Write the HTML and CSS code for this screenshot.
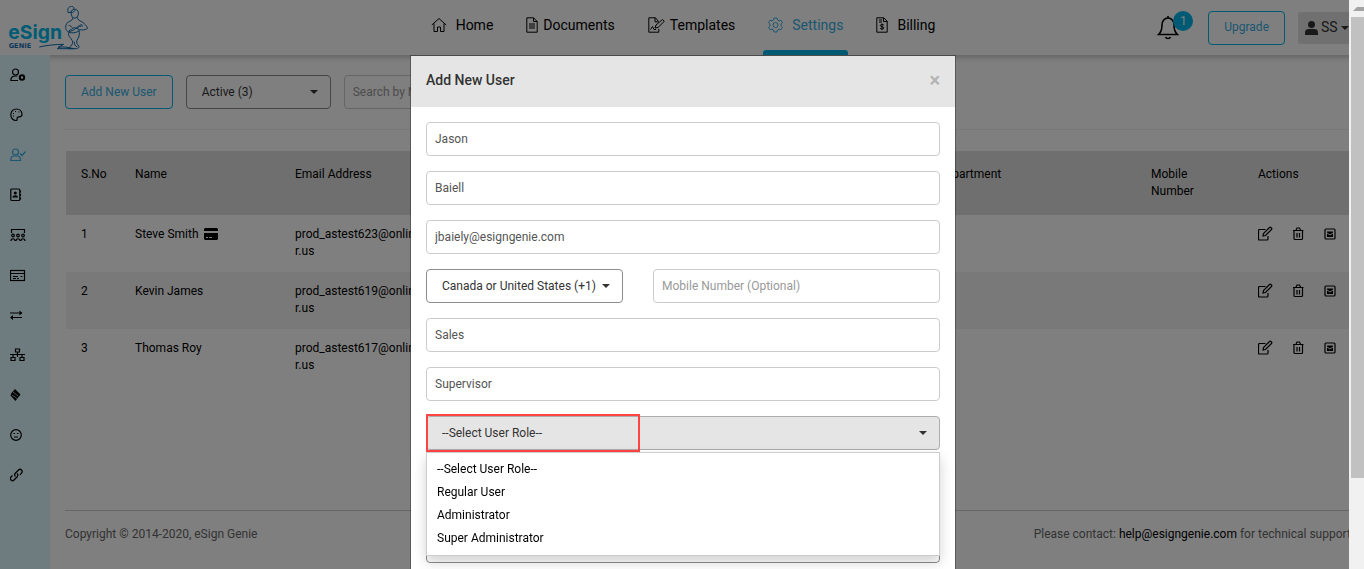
FILE: index.html
```html
<!DOCTYPE html>
<html lang="en">
<head>
  <meta charset="UTF-8">
  <meta name="viewport" content="width=device-width, initial-scale=1.0">
  <title>eSign Genie - Users</title>
  <link rel="stylesheet" href="styles.css">
</head>
<body>
  <!-- icons used more than once -->
  <svg class="sprite" aria-hidden="true">
    <symbol id="i-edit" viewBox="0 0 16 16"><path d="M7.500 3.500H1.500a1 1 0 0 0-1 1v8.500a1 1 0 0 0 1 1H9a1 1 0 0 0 1-1V10"/><path d="M5 10l.5-2.500L11.500 1.500a1 1 0 0 1 1.500 0l.5.5a1 1 0 0 1 0 1.500L7.500 9.500z"/></symbol>
    <symbol id="i-trash" viewBox="0 0 16 16"><path d="M3 4.500h10.500M6 4l1-2h2.500l1 2M4 4.500v8a1 1 0 0 0 1 1h6.500a1 1 0 0 0 1-1v-8M7 7v4.500M9.500 7v4.500"/></symbol>
    <symbol id="i-mail" viewBox="0 0 16 16"><rect x="3" y="3" width="10" height="10" rx="1"/><path class="fill" d="M5 5.500h6v1L8 8.500 5 6.500z"/><path class="fill" d="M5 7.500L8 9.500l3-2V11H5z"/></symbol>
  </svg>

  <div class="app">
    <header class="header">
      <a class="logo" href="#" aria-label="eSign Genie">
        <svg viewBox="27 18 240 132" width="80" height="44">
          <text class="logo-name" x="25" y="116">eSign</text>
          <text class="logo-sub" x="26" y="144">GENIE</text>
          <g class="logo-genie">
            <path d="M204 38c-2-10 1-19 10-19 7 0 9 5 7 9M204 38l10-2M221 28c-7 2-9 8-7 15 1 8 6 13 12 11 7-2 10-10 9-17-1-6-7-11-14-9zM213 38c7 0 11-5 13-9"/>
            <path d="M218 53c0 6-3 8-9 11-9 3-12 10-12 18 0 10 6 14 14 12 9-2 16-8 24-15 4-4 9-4 11-7M232 52c1 7 6 10 13 13 8 4 14 12 18 20-7 5-16 6-25 4-6-2-10-7-15-6-5 2-10 7-16 9M206 76c4 0 9 5 12 8M229 86c6-5 14-10 20-8"/>
            <path d="M207 95c-4 9 0 14 5 20 7 8 8 14 3 20-3 5-9 6-9 11h23c4 0 9-3 8-7l-4-5c-4-4-4-11 0-17 5-8 6-15 4-27M207 97c8 3 20 2 30-4M223 125c-1 8 2 13 9 16"/>
            <path d="M118 141c22-5 48-8 73-8l-17 9c18-3 29 0 48 4h-51"/>
          </g>
        </svg>
      </a>

      <nav class="nav">
        <a class="nav-item wide" href="#">
          <svg width="16" height="16" viewBox="0 0 16 16"><path d="M.8 8L8 1.500 15.200 8M3 6.500v8h3.500V10h3v4.500H13v-8"/></svg>Home</a>
        <a class="nav-item" href="#">
          <svg width="12" height="16" viewBox="0 0 12 16"><path d="M.8.8h6.700l3.700 3.700v10.700H.8zM7.500.8v3.700h3.700M3 7h6M3 9h6M3 11h6"/></svg>Documents</a>
        <a class="nav-item" href="#">
          <svg width="17" height="16" viewBox="0 0 17 16"><path d="M10.500 4.500L7.500.8H.8v14.400h10V12M7 .8v4h3.500M7 11l1-3 6.500-5.500 1.800 1.800L10 10.500zM2.500 12.500l2-3 1.500 3h2"/></svg>Templates</a>
        <a class="nav-item wide active" href="#">
          <svg width="15" height="16" viewBox="0 0 15 16"><path d="M6 1h3l.5 2 1.500.9 2-.6 1.500 2.500L13 7.200v1.600l1.500 1.400-1.500 2.500-2-.6-1.500.9L9 15H6l-.5-2-1.500-.9-2 .6-1.500-2.500L2 8.800V7.200L.5 5.800 2 3.300l2 .6L5.500 3z"/><circle cx="7.500" cy="8" r="2.500"/></svg>Settings</a>
        <a class="nav-item wide" href="#">
          <svg width="12" height="16" viewBox="0 0 12 16"><path d="M.8.800h7l3.400 3.400v11H.800zM7.500.800v3.700h3.700M3 3h3M3 5h3M7.800 8c-1.500-1-3.500-.6-3.500.6 0 1.600 3.600.8 3.600 2.300 0 1.200-2.200 1.600-3.700.5M6 6.500v6.500"/></svg>Billing</a>
      </nav>

      <div class="header-right">
        <button class="bell" type="button" aria-label="Notifications">
          <svg width="22" height="26" viewBox="0 0 22 26"><path d="M11 1v2M1.500 19.500c2.500-2 3.500-4 3.500-9.500C5 6 7.500 3 11 3s6 3 6 7c0 5.500 1 7.500 3.500 9.500zM8.500 22c.8 2 4.200 2 5 0"/></svg>
          <span class="badge">1</span>
        </button>
        <button class="btn" type="button">Upgrade</button>
        <button class="account" type="button">
          <svg width="13" height="14" viewBox="0 0 13 14"><circle cx="6.500" cy="3.500" r="3.500"/><path d="M0 14v-2.500C0 9 1.500 8 4 8h5c2.500 0 4 1 4 3.500V14z"/></svg>SS<span class="caret"></span>
        </button>
      </div>
    </header>

    <div class="body">
      <nav class="sidebar" aria-label="Settings">
        <a href="#" aria-label="Account"><svg viewBox="0 0 16 16"><circle cx="5.500" cy="5" r="3"/><path d="M8 13.500H.8c0-3 1.200-4.500 4.700-4.500h2"/><circle class="gear" cx="12" cy="10.500" r="2.200"/></svg></a>
        <a href="#" aria-label="Branding"><svg viewBox="0 0 16 16"><path d="M6.500 2C3 2 .8 4.500.8 7.800c0 3.400 2.500 5.800 5.200 5.700 2 0 .6-2 1.300-3 .9-1.200 4.700.4 4.700-3C12 4 9.500 2 6.500 2z"/><path d="M3 9h1M3 6.500h1M5 4.500h1M8.500 5h1"/></svg></a>
        <a class="active" href="#" aria-label="Users"><svg viewBox="0 0 16 16"><circle cx="5.500" cy="5" r="3"/><path d="M3.500 9h4c2 0 3 1.500 3 4.500H.8C.8 10.500 1.500 9 3.500 9zM10 6.500l2 2L15.500 4.500"/></svg></a>
        <a href="#" aria-label="Contacts"><svg viewBox="0 0 16 16"><rect x=".8" y="2" width="9" height="11.500" rx="1"/><circle class="fill" cx="5.300" cy="6" r="1.500"/><path class="fill" d="M2.500 10.500c0-3 5.500-3 5.500 0z"/><path d="M10.500 3.500v2M10.500 7v2M10.500 10.500v2"/></svg></a>
        <a href="#" aria-label="Groups"><svg viewBox="0 0 16 16"><path d="M1.500 6V2.500h13V6"/><circle cx="3" cy="8.500" r="1.300"/><circle cx="8" cy="8.500" r="1.300"/><circle cx="13" cy="8.500" r="1.300"/><path d="M1 14c0-3 4-3 4 0M6 14c0-3 4-3 4 0M11 14c0-3 4-3 4 0"/></svg></a>
        <a href="#" aria-label="Forms"><svg viewBox="0 0 16 16"><rect x=".5" y="3.500" width="14" height="10"/><path d="M1 6.500h14M3 9.500h5M3 11.500h3M7 11.500h2M10.500 9.500h2"/></svg></a>
        <a href="#" aria-label="Transfer"><svg viewBox="0 0 16 16"><path d="M0 6h11M2 10.500h10"/><path class="fill" d="M9.500 3.500l3 2.500-3 2.500zM3 8L0 10.500 3 13z"/></svg></a>
        <a href="#" aria-label="Workflow"><svg viewBox="0 0 16 16"><path d="M5.500 2h4v3h-4zM7.500 5v5M0 7.500h15M3 7.500V10M12 7.500V10M1 10.500h4v3H1zM10 10.500h4v3h-4z"/></svg></a>
        <a href="#" aria-label="Integrations"><svg viewBox="0 0 16 16"><path class="fill" d="M5 2l5.500 5.500L5.500 14 .5 8.500 1.500 6z"/><path class="cut" d="M3 5l5 4M2 8l5 3.500"/></svg></a>
        <a href="#" aria-label="Feedback"><svg viewBox="0 0 16 16"><circle cx="6" cy="8" r="5.300"/><path d="M3.500 6.500H5M7 6.500h1.500M4 10h4"/></svg></a>
        <a href="#" aria-label="Links"><svg viewBox="0 0 16 16"><path d="M5.500 9.500c-1-1-1-2.500 0-3.500l3-3c2-2 5 1 3 3L10 8M7 6.500c1 1 1 2.500 0 3.500l-3 3c-2 2-5-1-3-3l1.500-1.500"/></svg></a>
      </nav>

      <main class="content">
        <div class="toolbar">
          <button class="btn" type="button">Add New User</button>
          <div class="select status">
            <select aria-label="Status"><option>Active (3)</option></select>
          </div>
          <input class="field search" type="text" placeholder="Search by Name or Email" aria-label="Search">
        </div>

        <table class="users">
          <colgroup>
            <col class="c-no"><col class="c-name"><col class="c-email"><col><col class="c-dept"><col class="c-mobile"><col class="c-actions">
          </colgroup>
          <thead>
            <tr><th>S.No</th><th>Name</th><th>Email Address</th><th></th><th>Department</th><th>Mobile Number</th><th>Actions</th></tr>
          </thead>
          <tbody>
            <tr>
              <td>1</td>
              <td>Steve Smith <svg class="card" width="14" height="12" viewBox="0 0 14 12"><path d="M1 0h12l1 1v2H0V1zM0 5h14v6l-1 1H1l-1-1z"/><path class="card-line" d="M2 9.500h2M5 9.500h3"/></svg></td>
              <td>prod_astest623@onlinesigne<br>r.us</td><td></td><td></td><td></td>
              <td><div class="actions">
                <button type="button" aria-label="Edit"><svg><use href="#i-edit"/></svg></button>
                <button type="button" aria-label="Delete"><svg><use href="#i-trash"/></svg></button>
                <button type="button" aria-label="Email"><svg><use href="#i-mail"/></svg></button>
              </div></td>
            </tr>
            <tr>
              <td>2</td>
              <td>Kevin James</td>
              <td>prod_astest619@onlinesigne<br>r.us</td><td></td><td></td><td></td>
              <td><div class="actions">
                <button type="button" aria-label="Edit"><svg><use href="#i-edit"/></svg></button>
                <button type="button" aria-label="Delete"><svg><use href="#i-trash"/></svg></button>
                <button type="button" aria-label="Email"><svg><use href="#i-mail"/></svg></button>
              </div></td>
            </tr>
            <tr>
              <td>3</td>
              <td>Thomas Roy</td>
              <td>prod_astest617@onlinesigne<br>r.us</td><td></td><td></td><td></td>
              <td><div class="actions">
                <button type="button" aria-label="Edit"><svg><use href="#i-edit"/></svg></button>
                <button type="button" aria-label="Delete"><svg><use href="#i-trash"/></svg></button>
                <button type="button" aria-label="Email"><svg><use href="#i-mail"/></svg></button>
              </div></td>
            </tr>
          </tbody>
        </table>

        <footer class="footer">
          <span>Copyright © 2014-2020, eSign Genie</span>
          <span>Please contact: <a href="#">help@esigngenie.com</a> for technical support.</span>
        </footer>
      </main>
    </div>
  </div>

  <div class="overlay">
    <form class="modal" role="dialog" aria-labelledby="modal-title">
      <div class="modal-header">
        <h2 id="modal-title">Add New User</h2>
        <button class="close" type="button" aria-label="Close">×</button>
      </div>
      <div class="modal-body">
        <input class="field" type="text" value="Jason" aria-label="First Name">
        <input class="field" type="text" value="Baiell" aria-label="Last Name">
        <input class="field" type="text" value="jbaiely@esigngenie.com" aria-label="Email Address">
        <div class="phone">
          <div class="select">
            <select aria-label="Country Code"><option>Canada or United States (+1)</option></select>
          </div>
          <input class="field" type="text" placeholder="Mobile Number (Optional)" aria-label="Mobile Number">
        </div>
        <input class="field" type="text" value="Sales" aria-label="Department">
        <input class="field" type="text" value="Supervisor" aria-label="Title">
        <div class="select role">
          <select aria-label="User Role"><option>--Select User Role--</option></select>
          <div class="highlight"></div>
          <ul class="menu">
            <li><a href="#">--Select User Role--</a></li>
            <li><a href="#">Regular User</a></li>
            <li><a href="#">Administrator</a></li>
            <li><a href="#">Super Administrator</a></li>
          </ul>
        </div>
        <div class="checks">
          <input type="checkbox" aria-label="Can create templates">
          <input type="checkbox" aria-label="Can manage users">
        </div>
        <div class="select">
          <select aria-label="Time Zone"><option></option></select>
        </div>
      </div>
    </form>
  </div>

  <div class="scrollbar" aria-hidden="true">
    <div class="scroll-arrow"></div>
    <div class="scroll-thumb"></div>
  </div>
</body>
</html>
```
FILE: styles.css
```css
* { box-sizing: border-box; }
body { margin: 0; font-family: Roboto, "Liberation Sans", sans-serif; font-size: 12px; line-height: 17px; color: #333; background: #fff; overflow: hidden; }
a { color: #000; text-decoration: none; }
button, input, select { font: inherit; color: inherit; }
button { cursor: pointer; }
svg { fill: none; stroke: currentColor; }
svg .fill { fill: currentColor; stroke: none; }
.sprite { position: absolute; width: 0; height: 0; }

.app { display: flex; flex-direction: column; min-height: 100vh; }

/* header */
.header { display: grid; grid-template-columns: 1fr auto 1fr; height: 55px; padding: 0 9px; background: #fff; box-shadow: 0 2px 6px rgba(0, 0, 0, .25); }
.logo { padding-top: 6px; }
.logo svg { display: block; }
.logo text { stroke: none; font-weight: 700; }
.logo-name { font-family: Inter, sans-serif; font-size: 58px; fill: #00b8ea; }
.logo-sub { font-family: "DejaVu Sans", sans-serif; font-size: 20px; fill: #1b6fb5; }
.logo-genie { stroke: #0d6aac; stroke-width: 3; }
.nav { display: flex; gap: 23px; padding-left: 2px; }
.nav-item { position: relative; display: flex; align-items: center; gap: 5px; padding: 0 5px 5px; font-size: 14px; }
.nav-item.wide { gap: 9px; }
.nav-item.active { color: #37aee2; }
.nav-item.active::after { content: ""; position: absolute; left: 0; right: 0; bottom: 0; height: 5px; border-radius: 3px 3px 0 0; background: #00b4e8; }
.header-right { display: flex; justify-content: flex-end; align-items: center; gap: 13px; padding-right: 4px; }
.bell { position: relative; width: 38px; height: 26px; padding: 0; border: 0; background: none; color: #000; text-align: left; }
.bell svg { display: block; stroke-width: 1.6; }
.badge { position: absolute; top: -4px; left: 16px; width: 20px; height: 20px; border-radius: 50%; background: #00b4e8; color: #fff; line-height: 20px; text-align: center; }
.btn { height: 34px; padding: 0 15px; border: 1px solid #00b4e8; border-radius: 4px; background: #fff; color: #37aee2; }
.account { display: flex; align-items: center; gap: 3px; height: 32px; padding: 0 0 0 7px; width: 53px; border: 0; border-radius: 3px; background: #e0e0e0; font-size: 14px; }
.account svg { fill: #333; stroke: none; flex: none; }
.caret { border: 4px solid transparent; border-top-color: #333; border-bottom: 0; flex: none; }

/* page */
.body { display: flex; flex: 1; }
.sidebar { position: relative; width: 50px; background: #dff8ff; }
.sidebar a { display: flex; align-items: center; height: 40px; padding-left: 10px; }
.sidebar svg { width: 16px; height: 16px; stroke-width: 1.2; }
.sidebar a.active { color: #37aee2; }
.sidebar .gear { stroke-width: 2; }
.sidebar .cut { stroke: #dff8ff; stroke-width: .7; }
.content { display: flex; flex-direction: column; flex: 1; min-width: 0; padding: 20px 10px 0 15px; }
.toolbar { display: flex; gap: 13px; padding-bottom: 20px; border-bottom: 1px solid #eee; }

.field { display: block; width: 100%; height: 34px; padding: 0 8px; border: 1px solid #ccc; border-radius: 4px; background: #fff; color: #555; }
.field::placeholder { color: #999; opacity: 1; }
.toolbar .search { width: 200px; }
.select { position: relative; }
.select select { display: block; appearance: none; width: 100%; height: 34px; padding: 0 15px; border: 1px solid #8c8c8c; border-radius: 4px; background: #fff; color: #333; }
.select::after { content: ""; position: absolute; top: 15px; right: 13px; border: 4px solid transparent; border-top-color: #333; border-bottom: 0; }
.status { width: 145px; }

.users { width: 100%; margin: 21px 0 0 1px; border-collapse: collapse; table-layout: fixed; color: #000; }
.users th, .users td { padding: 11px 15px 12px; text-align: left; vertical-align: top; font-weight: 400; }
.users th { height: 64px; padding-top: 15px; background: #dfdfdf; }
.users td { height: 57px; }
.users tbody tr:nth-child(even) { background: #f2f2f2; }
.c-no { width: 54px; }
.c-name { width: 160px; }
.c-email { width: 201px; }
.c-dept { width: 213px; }
.c-mobile { width: 107px; }
.c-actions { width: 112px; }
.card { margin-left: 2px; vertical-align: -2px; fill: #000; stroke: none; }
.card .card-line { stroke: #fff; }
.actions { display: flex; gap: 16px; }
.actions button { width: 16px; height: 16px; padding: 0; border: 0; background: none; color: #000; }
.actions svg { display: block; width: 16px; height: 16px; stroke-width: 1.2; }

.footer { display: flex; justify-content: space-between; margin-top: auto; height: 59px; padding-top: 15px; border-top: 1px solid #ccc; color: #666; }

/* add user dialog */
.overlay { position: fixed; inset: 0; z-index: 10; padding: 55px 0 0 2px; background: rgba(0, 0, 0, .5); overflow: hidden; }
.modal { width: 546px; max-width: 100%; margin: 0 auto; border: 1px solid rgba(0, 0, 0, .3); background: #fff; background-clip: padding-box; }
.modal-header { display: flex; justify-content: space-between; align-items: center; height: 51px; padding: 0 15px 2px; background: #e5e5e5; }
.modal-header h2 { margin: 0; font-size: 14px; font-weight: 500; }
.close { padding: 0; border: 0; background: none; color: #b4b4b4; font-size: 20px; font-weight: 700; }
.modal-body { display: flex; flex-direction: column; gap: 15px; padding: 15px 15px 30px; }
.phone { display: grid; grid-template-columns: 197px 1fr; gap: 30px; }
.role select { background: #e5e5e5; border-color: #adadad; }
.highlight { position: absolute; top: -2px; left: 0; width: 214px; height: 38px; border: 2px solid #f44; pointer-events: none; }
.menu { position: absolute; top: 36px; left: 0; right: 0; z-index: 1; margin: 0; padding: 5px 0; border: 1px solid #ccc; background: #fff; box-shadow: 0 6px 12px rgba(0, 0, 0, .18); list-style: none; }
.menu a { display: block; padding: 3px 10px; }
.checks { display: flex; flex-direction: column; align-items: flex-start; gap: 9px; padding: 4px 0 10px; }
.checks input { width: 13px; height: 13px; margin: 0; }

/* window scrollbar */
.scrollbar { position: fixed; top: 0; right: 0; bottom: 0; z-index: 20; width: 15px; padding-left: 2px; background: #f1f1f1; }
.scroll-arrow { height: 17px; padding: 7px 0 0 2px; }
.scroll-arrow::before { content: ""; display: block; width: 8px; border: 4px solid transparent; border-bottom-color: #a3a3a3; border-top: 0; }
.scroll-thumb { height: 81%; background: #c1c1c1; }
```
